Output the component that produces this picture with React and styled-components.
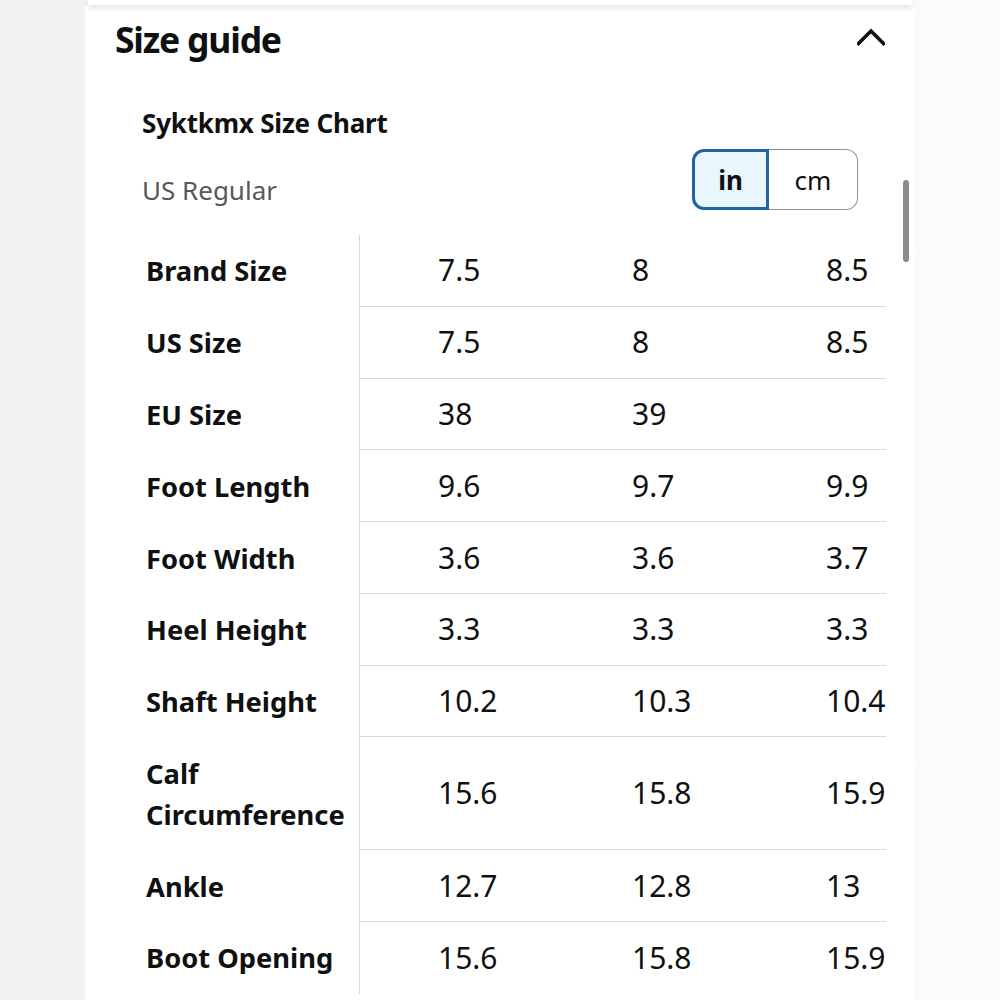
import React from "react";
import styled, { createGlobalStyle } from "styled-components";

const GlobalStyle = createGlobalStyle`
  html, body {
    margin: 0;
    padding: 0;
  }
  body {
    background: linear-gradient(90deg, #f1f1f1 0%, #f7f7f7 50%, #fbfbfb 100%);
    font-family: "Noto Sans", "Open Sans", sans-serif;
    color: #0f1111;
    height: 1000px;
    overflow: hidden;
  }
`;

const Page = styled.div`
  width: 830px;
  margin-left: 85px;
`;

const PrevCard = styled.div`
  height: 5px;
  margin: 0 3px;
  background: #ffffff;
  box-shadow: 0 2px 6px rgba(0, 0, 0, 0.16);
  position: relative;
  z-index: 1;
`;

const Panel = styled.section`
  position: relative;
  background: #ffffff;
  height: 995px;
`;

const Header = styled.div`
  display: flex;
  align-items: center;
  justify-content: space-between;
  height: 68px;
  padding: 0 30px 0 30px;
`;

const Heading = styled.h2`
  margin: 0;
  font-size: 35.5px;
  font-weight: 700;
  letter-spacing: -1.2px;
`;

const Chevron = styled.svg`
  width: 28px;
  height: 18px;
  margin-bottom: 4px;
`;

const Body = styled.div`
  padding: 0 29px 0 57px;
`;

const ChartTitle = styled.h3`
  margin: 33px 0 0;
  font-size: 26px;
  font-weight: 700;
  letter-spacing: -0.2px;
  line-height: 34px;
`;

const SubRow = styled.div`
  display: flex;
  align-items: center;
  justify-content: space-between;
  margin-top: 9px;
  padding-right: 28px;
`;

const Region = styled.span`
  font-size: 26px;
  color: #565959;
  padding-top: 21px;
`;

const Toggle = styled.div`
  display: flex;
  height: 61px;
`;

const Segment = styled.button`
  font-family: inherit;
  font-size: 26px;
  color: #0f1111;
  height: 100%;
  padding: 0;
  cursor: pointer;
  ${({ $active }) =>
    $active
      ? `
    width: 77px;
    font-weight: 700;
    background: #eaf6fe;
    border: 3px solid #2162a1;
    border-radius: 12px 0 0 12px;
  `
      : `
    width: 89px;
    font-weight: 400;
    background: #ffffff;
    border: 1.5px solid #8d9096;
    border-left: none;
    border-radius: 0 12px 12px 0;
  `}
`;

const TableClip = styled.div`
  margin-top: 25px;
  width: 744px;
  overflow: hidden;
`;

const Row = styled.div`
  display: grid;
  grid-template-columns: 218px repeat(3, 194px);
  width: 800px;
`;

const Label = styled.div`
  font-size: 27.3px;
  font-weight: 700;
  line-height: 41px;
  padding: 15.4px 12px 15.4px 4px;
  border-right: 1.5px solid #d5d9d9;
  display: flex;
  align-items: center;
`;

const Value = styled.div`
  font-size: 30px;
  line-height: 40px;
  padding: 15.4px 0 15.4px 78px;
  display: flex;
  align-items: center;
  border-bottom: ${({ $last }) => ($last ? "none" : "1.5px solid #d5d9d9")};
  white-space: nowrap;
`;

const ScrollThumb = styled.div`
  position: absolute;
  left: 818px;
  top: 175px;
  width: 6px;
  height: 82px;
  border-radius: 3px;
  background: #8a8a8a;
`;

const rows = [
  ["Brand Size", "7.5", "8", "8.5"],
  ["US Size", "7.5", "8", "8.5"],
  ["EU Size", "38", "39", ""],
  ["Foot Length", "9.6", "9.7", "9.9"],
  ["Foot Width", "3.6", "3.6", "3.7"],
  ["Heel Height", "3.3", "3.3", "3.3"],
  ["Shaft Height", "10.2", "10.3", "10.4"],
  ["Calf Circumference", "15.6", "15.8", "15.9"],
  ["Ankle", "12.7", "12.8", "13"],
  ["Boot Opening", "15.6", "15.8", "15.9"],
];

const App = () => {
  return (
    <>
      <GlobalStyle />
      <Page>
        <PrevCard />
        <Panel>
          <Header>
            <Heading>Size guide</Heading>
            <Chevron viewBox="0 0 28 18">
              <polyline
                points="1.5,15.5 14,3 26.5,15.5"
                fill="none"
                stroke="#0f1111"
                strokeWidth="3.6"
                strokeLinecap="square"
              />
            </Chevron>
          </Header>
          <Body>
            <ChartTitle>Syktkmx Size Chart</ChartTitle>
            <SubRow>
              <Region>US Regular</Region>
              <Toggle>
                <Segment $active>in</Segment>
                <Segment>cm</Segment>
              </Toggle>
            </SubRow>
            <TableClip>
              {rows.map((r, i) => (
                <Row key={r[0]}>
                  <Label>{r[0]}</Label>
                  {r.slice(1).map((v, j) => (
                    <Value key={j} $last={i === rows.length - 1}>
                      {v}
                    </Value>
                  ))}
                </Row>
              ))}
            </TableClip>
          </Body>
          <ScrollThumb />
        </Panel>
      </Page>
    </>
  );
};

export default App;
